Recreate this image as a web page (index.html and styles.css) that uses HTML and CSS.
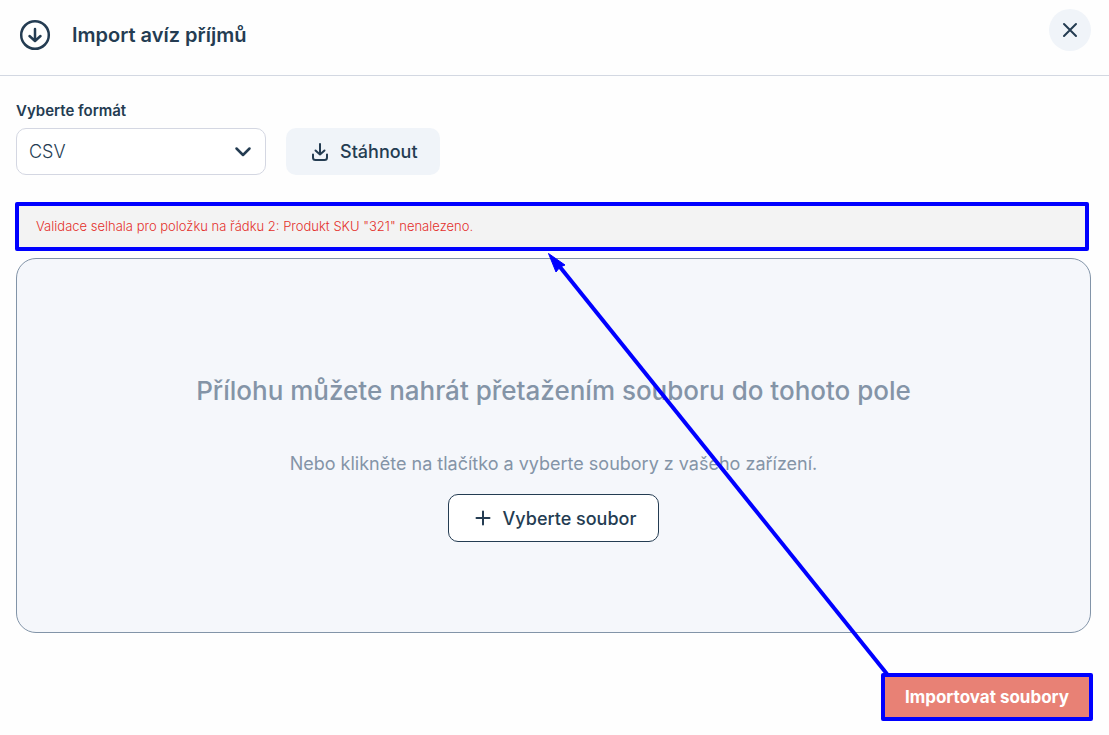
FILE: index.html
```html
<!DOCTYPE html>
<html lang="cs">
<head>
<meta charset="utf-8">
<meta name="viewport" content="width=device-width, initial-scale=1">
<title>Import avíz příjmů</title>
<link rel="stylesheet" href="styles.css">
</head>
<body>
<main class="dialog">
  <header class="header">
    <svg class="header-icon" viewBox="0 0 32 32" aria-hidden="true">
      <circle cx="16" cy="16" r="13.8"/>
      <path d="M16 10v11.500M10.5 17l5.5 5 5.5-5"/>
    </svg>
    <h1 class="title">Import avíz příjmů</h1>
    <button class="close" type="button" aria-label="Zavřít">
      <svg viewBox="0 0 16 16" aria-hidden="true"><path d="M2 2l12 12M14 2L2 14"/></svg>
    </button>
  </header>
  <div class="content">
    <label class="label" for="format">Vyberte formát</label>
    <div class="format-row">
      <div class="select-wrap">
        <select class="select" id="format"><option>CSV</option></select>
        <svg class="chevron" viewBox="0 0 18 12" aria-hidden="true"><path d="M2.5 2.5L9 9l6.500-6.500"/></svg>
      </div>
      <button class="download" type="button">
        <svg viewBox="0 0 18 20" aria-hidden="true"><path d="M9 2v10.500M4.500 8.500L9 12.500l4.500-4M2 12.500v3a2.500 2.500 0 0 0 2.500 2.500h9a2.500 2.500 0 0 0 2.500-2.500v-3"/></svg>
        Stáhnout
      </button>
    </div>
    <p class="error" role="alert">Validace selhala pro položku na řádku 2: Produkt SKU "321" nenalezeno.</p>
    <section class="dropzone">
      <h2 class="drop-title">Přílohu můžete nahrát přetažením souboru do tohoto pole</h2>
      <p class="drop-text">Nebo klikněte na tlačítko a vyberte soubory z vašeho zařízení.</p>
      <button class="choose" type="button">
        <svg viewBox="0 0 16 16" aria-hidden="true"><path d="M8 1.500v13M1.500 8h13"/></svg>
        Vyberte soubor
      </button>
    </section>
  </div>
  <footer class="footer">
    <button class="import" type="button">Importovat soubory</button>
  </footer>
  <svg class="arrow" width="360" height="440" viewBox="0 0 360 440" aria-hidden="true">
    <path class="arrow-line" d="M16 22L347 434"/>
    <path class="arrow-head" d="M8.500 13.500L25 25 20 27 16 32Z"/>
  </svg>
</main>
</body>
</html>
```

FILE: styles.css
```css
* {
  box-sizing: border-box;
}

body {
  margin: 0;
  background: #fefefe;
  color: #243c52;
  font-family: Inter, "Liberation Sans", sans-serif;
}

button,
select {
  font: inherit;
  color: inherit;
}

button svg,
.header-icon,
.chevron {
  fill: none;
  stroke: #243c52;
  stroke-width: 2;
  stroke-linecap: round;
  stroke-linejoin: round;
}

.dialog {
  position: relative;
}

.header {
  display: flex;
  align-items: center;
  height: 76px;
  padding: 0 18px 6px 19px;
  border-bottom: 1px solid #d3d8e2;
}

.header .header-icon {
  width: 32px;
  height: 32px;
  stroke-width: 2.500;
}

.title {
  flex: 1;
  margin: 0 0 0 21px;
  font-size: 20px;
  line-height: 24px;
  font-weight: 600;
}

.close {
  display: grid;
  place-items: center;
  width: 42px;
  height: 42px;
  margin-bottom: 9px;
  padding: 0;
  border: 0;
  border-radius: 50%;
  background: #f0f4f9;
}

.close svg {
  width: 16px;
  height: 16px;
}

.content {
  padding: 24px 18px 0 16px;
}

.label {
  display: block;
  margin-bottom: 6px;
  font-size: 15px;
  line-height: 22px;
  font-weight: 600;
}

.format-row {
  display: flex;
  gap: 20px;
}

.select-wrap {
  position: relative;
  width: 250px;
}

.select {
  width: 100%;
  height: 47px;
  padding: 0 40px 0 12px;
  border: 1px solid #d4d7e2;
  border-radius: 10px;
  background: #fff;
  font-size: 18px;
  font-weight: 300;
  appearance: none;
}

.chevron {
  position: absolute;
  top: 18px;
  right: 14px;
  width: 18px;
  height: 12px;
  pointer-events: none;
}

.content .chevron {
  stroke-width: 2.500;
}

.download,
.choose {
  display: flex;
  align-items: center;
  justify-content: center;
  border: 0;
  border-radius: 10px;
  font-size: 18px;
  font-weight: 500;
}

.download {
  gap: 11px;
  height: 47px;
  padding: 0 22px 0 25px;
  background: #f0f4f9;
}

.download svg {
  width: 18px;
  height: 20px;
}

.error {
  margin: 27px 2px 7px -1px;
  padding: 10px 17px;
  border: 4px solid #00f;
  border-radius: 2px;
  background: #f3f3f3;
  color: #e4302b;
  font-size: 13px;
  line-height: 21px;
  font-weight: 300;
}

.dropzone {
  display: flex;
  flex-direction: column;
  align-items: center;
  padding: 115px 20px 90px;
  border: 1px solid #8294a8;
  border-radius: 20px;
  background: #f5f7fb;
  color: #8494a7;
  text-align: center;
}

.drop-title {
  margin: 0;
  font-size: 26px;
  line-height: 34px;
  font-weight: 500;
}

.drop-text {
  margin: 44px 0 18px;
  font-size: 18px;
  line-height: 24px;
}

.choose {
  gap: 12px;
  height: 48px;
  padding: 0 22px 0 26px;
  border: 1px solid #243c52;
  background: #fff;
  color: #243c52;
}

.choose svg {
  width: 16px;
  height: 16px;
}

.footer {
  display: flex;
  justify-content: flex-end;
  padding: 40px 16px 14px;
}

.import {
  height: 48px;
  padding: 0 20px;
  border: 4px solid #00f;
  border-radius: 2px;
  background: #e88175;
  color: #fff;
  font-size: 17px;
  font-weight: 700;
}

.arrow {
  position: absolute;
  top: 240px;
  left: 540px;
  pointer-events: none;
}

.arrow-line {
  fill: none;
  stroke: #00f;
  stroke-width: 4;
}

.arrow-head {
  fill: #00f;
  stroke: #00f;
}
```
